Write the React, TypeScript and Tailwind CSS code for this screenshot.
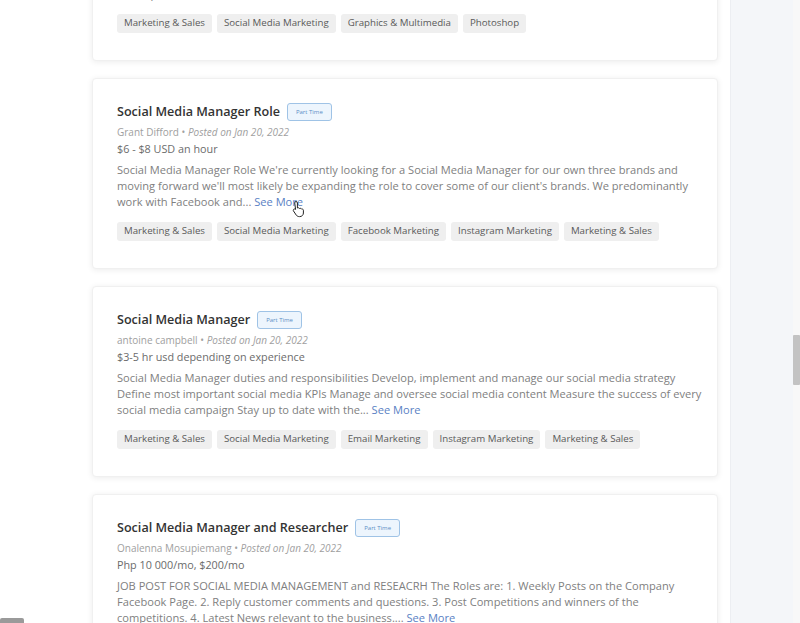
import React from 'react'

const jobs = [
  {
    title: 'Social Media Marketing Specialist',
    author: 'Maria Lopez',
    date: 'Jan 20, 2022',
    pay: '$5 - $10 USD an hour',
    desc: 'We are looking for a creative social media marketing specialist to help us grow our brand presence across all platforms and create engaging content for our audience every single week. You will design posts, plan campaigns and report on...',
    tags: ['Marketing & Sales', 'Social Media Marketing', 'Graphics & Multimedia', 'Photoshop'],
  },
  {
    title: 'Social Media Manager Role',
    author: 'Grant Difford',
    date: 'Jan 20, 2022',
    pay: '$6 - $8 USD an hour',
    desc: "Social Media Manager Role We're currently looking for a Social Media Manager for our own three brands and moving forward we'll most likely be expanding the role to cover some of our client's brands. We predominantly work with Facebook and...",
    tags: ['Marketing & Sales', 'Social Media Marketing', 'Facebook Marketing', 'Instagram Marketing', 'Marketing & Sales'],
    cursor: true,
  },
  {
    title: 'Social Media Manager',
    author: 'antoine campbell',
    date: 'Jan 20, 2022',
    pay: '$3-5 hr usd depending on experience',
    desc: 'Social Media Manager duties and responsibilities Develop, implement and manage our social media strategy Define most important social media KPIs Manage and oversee social media content Measure the success of every social media campaign Stay up to date with the...',
    tags: ['Marketing & Sales', 'Social Media Marketing', 'Email Marketing', 'Instagram Marketing', 'Marketing & Sales'],
  },
  {
    title: 'Social Media Manager and Researcher',
    author: 'Onalenna Mosupiemang',
    date: 'Jan 20, 2022',
    pay: 'Php 10 000/mo, $200/mo',
    desc: 'JOB POST FOR SOCIAL MEDIA MANAGEMENT and RESEACRH The Roles are: 1. Weekly Posts on the Company Facebook Page. 2. Reply customer comments and questions. 3. Post Competitions and winners of the competitions. 4. Latest News relevant to the business....',
    tags: ['Marketing & Sales', 'Social Media Marketing', 'Content Writing'],
  },
]

function Pointer() {
  return (
    <svg className="absolute left-[199px] top-[121px]" width="14" height="18" viewBox="0 0 14 18">
      <path
        d="M4 1.5c.8 0 1.4.6 1.4 1.4V8l.3-.1c.7-.3 1.5 0 1.8.6.6-.4 1.5-.2 1.9.5.6-.3 1.4 0 1.7.6l.3.6V13c0 2-1.6 3.6-3.6 3.6H7.3c-1.3 0-2.4-.6-3.1-1.6L1.5 11c-.4-.6-.3-1.4.3-1.8.6-.4 1.3-.3 1.8.2l-.9-6.5C2.7 2.1 3.2 1.5 4 1.5z"
        fill="#fff"
        stroke="#222"
        strokeWidth="1"
      />
    </svg>
  )
}

function JobCard({ job }: { job: (typeof jobs)[0] }) {
  return (
    <div className="relative bg-white rounded-[4px] border border-[#f0f0f0] shadow-[0_1px_6px_rgba(0,0,0,0.08)] pl-[24px] pr-[14px] pt-[23px] pb-[27px]">
      <div className="h-[20px] flex items-center gap-[7px]">
        <h3 className="text-[12.6px] font-semibold text-[#333]">{job.title}</h3>
        <span className="h-[18px] px-[8px] flex items-center rounded-[3px] border border-[#9fc3e6] bg-[#edf5fd] text-[6px] text-[#5b8ec6]">
          Part Time
        </span>
      </div>
      <div className="mt-[3px] leading-[14px] text-[10px] text-[#a0a0a0] whitespace-nowrap">
        {job.author} • <span className="italic">Posted on {job.date}</span>
      </div>
      <div className="mt-[2px] leading-[16px] text-[10.8px] text-[#6b6b6b]">{job.pay}</div>
      <p className="mt-[5px] leading-[16px] text-[11.1px] text-[#808080]">
        {job.desc} <span className="text-[#5a7fc4]">See More</span>
      </p>
      <div className="mt-[12px] flex gap-[5px]">
        {job.tags.map((t, i) => (
          <span
            key={i}
            className="h-[19px] px-[7px] flex items-center rounded-[3px] bg-[#efefef] text-[9.7px] text-[#5a5a5a] whitespace-nowrap"
          >
            {t}
          </span>
        ))}
      </div>
      {job.cursor && <Pointer />}
    </div>
  )
}

export default function App() {
  return (
    <div
      className="relative w-[800px] h-[623px] overflow-hidden bg-white flex"
      style={{ fontFamily: '"Open Sans", "Noto Sans", sans-serif' }}
    >
      <div className="w-[92px] shrink-0" />
      <div className="w-[626px] shrink-0 flex flex-col gap-[17px] -mt-[130px]">
        {jobs.map((j, i) => (
          <JobCard key={i} job={j} />
        ))}
      </div>
      <div className="w-[12px] shrink-0" />
      <div className="w-[63px] shrink-0 bg-[#f4f6f9] border-l border-[#eceef2]" />
      <div className="w-[7px] shrink-0 bg-[#f8f8f8] pt-[335px]">
        <div className="h-[50px] bg-[#c3c3c3] rounded-[1px]" />
      </div>
      <div className="absolute left-0 bottom-0 w-[24px] h-[5px] rounded-t-[2px] bg-[#9a9a9a]" />
    </div>
  )
}
